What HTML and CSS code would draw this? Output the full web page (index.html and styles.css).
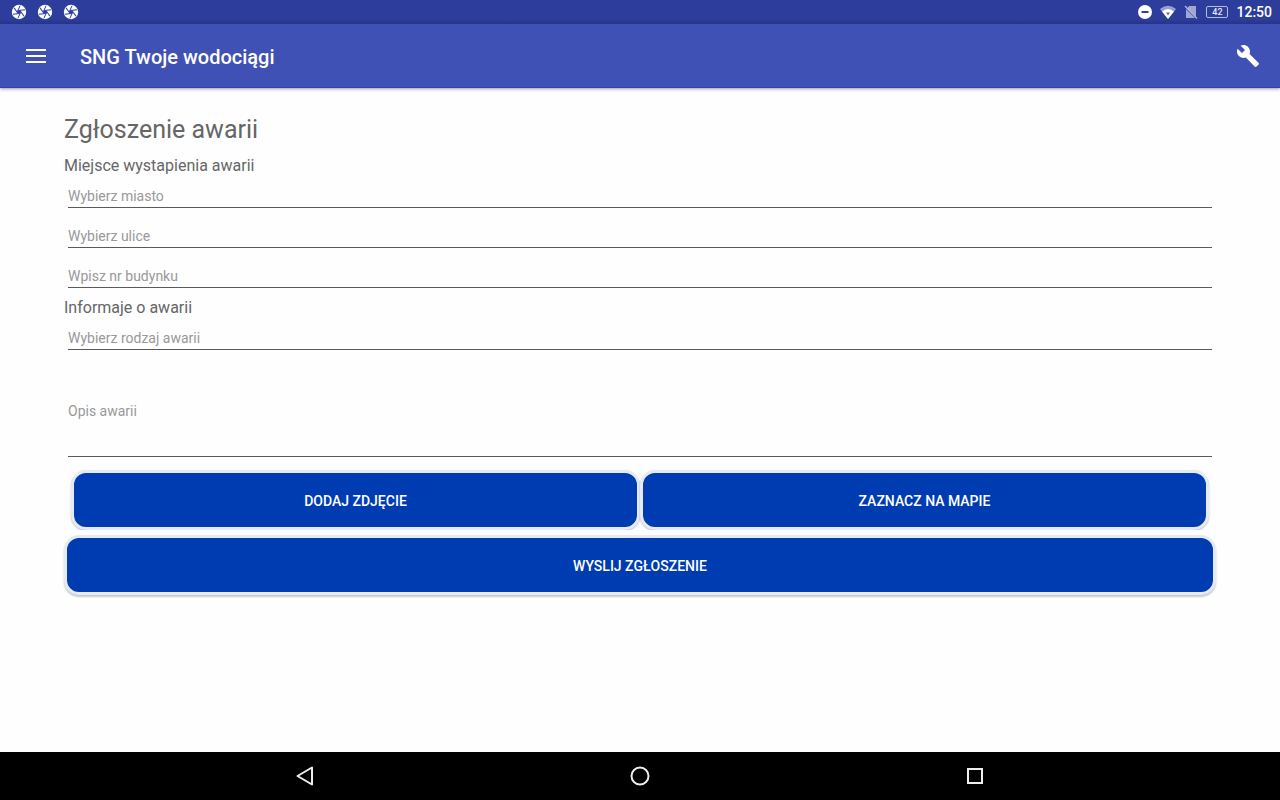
FILE: index.html
```html
<!DOCTYPE html>
<html lang="pl">
<head>
<meta charset="utf-8">
<meta name="viewport" content="width=device-width, initial-scale=1">
<title>SNG Twoje wodociągi</title>
<link rel="stylesheet" href="styles.css">
</head>
<body>
<svg class="defs" aria-hidden="true">
  <symbol id="shutter" viewBox="0 0 24 24">
    <circle cx="12" cy="12" r="10.800" fill="#fff"/>
    <circle cx="12" cy="12" r="2.800" fill="#2d3d9c"/>
    <g stroke="#2d3d9c" stroke-width="1.500">
      <path id="blade" d="M9.600 11.500L13.600 2.500"/>
      <use href="#blade" transform="rotate(60 12 12)"/>
      <use href="#blade" transform="rotate(120 12 12)"/>
      <use href="#blade" transform="rotate(180 12 12)"/>
      <use href="#blade" transform="rotate(240 12 12)"/>
      <use href="#blade" transform="rotate(300 12 12)"/>
    </g>
  </symbol>
</svg>
<div class="screen">
  <div class="status">
    <div class="status-apps">
      <svg class="shutter"><use href="#shutter"/></svg>
      <svg class="shutter"><use href="#shutter"/></svg>
      <svg class="shutter"><use href="#shutter"/></svg>
    </div>
    <div class="status-system">
      <svg class="dnd" viewBox="0 0 14 14"><circle cx="7" cy="7" r="7" fill="#fff"/><path d="M3.500 7h7" stroke="#303f9f" stroke-width="2"/></svg>
      <svg class="wifi" viewBox="0 0 16 14"><path d="M0 4Q8-2.500 16 4L8 14z" fill="#fff" opacity=".5"/><path d="M2 6.500Q8 1.500 14 6.500L8 14z" fill="#fff"/><path d="M6 7.500h4L8 10.500z" fill="#66727a"/></svg>
      <svg class="sim" viewBox="0 0 14 14"><path d="M5 1h7v10.500L3.500 3z M2 4v9h9z" fill="#fff" opacity=".55"/><path d="M1 1l12 12.500" stroke="#fff" stroke-opacity=".65" stroke-width="1.200"/></svg>
      <span class="battery">42</span>
      <span class="clock">12:50</span>
    </div>
  </div>
  <header class="appbar">
    <button class="icon-button" type="button" aria-label="Menu">
      <svg class="icon" viewBox="0 0 24 24"><path fill="#fff" d="M2 5h20v2H2zm0 6h20v2H2zm0 6h20v2H2z"/></svg>
    </button>
    <div class="appbar-title">SNG Twoje wodociągi</div>
    <button class="icon-button" type="button" aria-label="Narzędzia">
      <svg class="icon" viewBox="0 0 24 24"><path fill="#fff" d="M22.700 19l-9.100-9.100c.9-2.300.4-5-1.500-6.900-2-2-5-2.400-7.400-1.300L9 6 6 9 1.600 4.700C.4 7.100.9 10.100 2.900 12.100c1.900 1.900 4.600 2.400 6.900 1.500l9.100 9.100c.4.400 1 .4 1.400 0l2.300-2.300c.5-.4.5-1.100.1-1.400z"/></svg>
    </button>
  </header>
  <main class="content">
    <h1 class="title">Zgłoszenie awarii</h1>
    <form class="form">
      <h2 class="section">Miejsce wystapienia awarii</h2>
      <div class="fields">
        <input class="field" type="text" aria-label="Miasto" placeholder="Wybierz miasto">
        <input class="field" type="text" aria-label="Ulica" placeholder="Wybierz ulice">
        <input class="field" type="text" aria-label="Numer budynku" placeholder="Wpisz nr budynku">
      </div>
      <h2 class="section section-next">Informaje o awarii</h2>
      <div class="fields">
        <input class="field" type="text" aria-label="Rodzaj awarii" placeholder="Wybierz rodzaj awarii">
        <textarea class="field field-area" aria-label="Opis awarii" placeholder="Opis awarii"></textarea>
      </div>
      <div class="actions">
        <button class="action" type="button">DODAJ ZDJĘCIE</button>
        <button class="action" type="button">ZAZNACZ NA MAPIE</button>
      </div>
      <button class="action action-wide" type="submit">WYSLIJ ZGŁOSZENIE</button>
    </form>
  </main>
  <nav class="navbar">
    <button class="nav-button" type="button" aria-label="Wstecz">
      <svg class="icon" viewBox="0 0 24 24"><path d="M4.500 12L19 3.500v17z" fill="none" stroke="#eee" stroke-width="2" stroke-linejoin="round"/></svg>
    </button>
    <button class="nav-button" type="button" aria-label="Ekran główny">
      <svg class="icon" viewBox="0 0 24 24"><circle cx="12" cy="12" r="8.500" fill="none" stroke="#eee" stroke-width="2"/></svg>
    </button>
    <button class="nav-button" type="button" aria-label="Ostatnie">
      <svg class="icon" viewBox="0 0 24 24"><path d="M5 5h14v14H5z" fill="none" stroke="#eee" stroke-width="2"/></svg>
    </button>
  </nav>
</div>
</body>
</html>
```
FILE: styles.css
```css
* {
  box-sizing: border-box;
}

body {
  margin: 0;
  background: #fefefe;
  color: #666;
  font-family: Roboto, "Noto Sans", sans-serif;
}

button,
input,
textarea {
  font-family: inherit;
}

.defs {
  position: absolute;
  width: 0;
  height: 0;
}

.screen {
  display: flex;
  flex-direction: column;
  min-height: 100vh;
}

.status {
  display: flex;
  align-items: center;
  justify-content: space-between;
  height: 24px;
  padding: 0 8px 0 11px;
  background: linear-gradient(#2d3d9c 80%, #26358a);
  color: #fff;
}

.status-apps {
  display: flex;
  gap: 10px;
}

.shutter {
  width: 16px;
  height: 16px;
}

.status-system {
  display: flex;
  align-items: center;
  gap: 8px;
}

.dnd,
.sim {
  width: 14px;
  height: 14px;
}

.wifi {
  width: 16px;
  height: 14px;
}

.battery {
  width: 22px;
  border: 1px solid #b4bbe2;
  border-radius: 2px;
  color: #e4e7f6;
  font-size: 9px;
  font-weight: 500;
  line-height: 10px;
  text-align: center;
}

.clock {
  font-size: 14px;
  font-weight: 500;
  line-height: 24px;
}

.appbar {
  display: flex;
  align-items: center;
  height: 64px;
  padding: 0 20px 0 24px;
  background: #3f51b5;
  border-bottom: 1px solid #31429c;
  box-shadow: 0 1px 3px rgba(40, 55, 130, 0.5);
}

.icon-button {
  display: flex;
  padding: 0;
  border: 0;
  background: none;
}

.icon {
  width: 24px;
  height: 24px;
}

.appbar-title {
  flex: 1;
  padding: 2px 0 0 32px;
  color: #fff;
  font-size: 20px;
  font-weight: 500;
  line-height: 24px;
}

.content {
  flex: 1;
  padding: 26px 64px;
}

.title {
  margin: 0 0 10px;
  font-size: 25px;
  font-weight: 400;
  line-height: 32px;
}

.form {
  display: flex;
  flex-direction: column;
}

.section {
  margin: 0 0 8px;
  font-size: 16px;
  font-weight: 400;
  line-height: 20px;
}

.section-next {
  margin-top: 10px;
}

.fields {
  display: flex;
  flex-direction: column;
  gap: 16px;
  padding: 0 4px;
}

.field {
  width: 100%;
  height: 24px;
  padding: 0;
  border: 0;
  border-bottom: 1px solid #5a5a5a;
  border-radius: 0;
  background: transparent;
  color: #333;
  font-size: 14px;
  line-height: 20px;
  outline: 0;
}

.field::placeholder {
  color: #999;
  opacity: 1;
}

.field-area {
  height: 91px;
  padding: 35px 0;
  resize: none;
}

.actions {
  display: flex;
  margin-top: 11px;
  padding: 2px 7px 0;
  overflow: hidden;
}

.action {
  flex: 1;
  height: 60px;
  padding: 2px 6px 0;
  border: 3px solid #e6ebf3;
  border-radius: 15px;
  background: #003cb1;
  box-shadow: 0 1px 2px rgba(0, 0, 0, 0.25);
  color: #fff;
  font-size: 14px;
  font-weight: 500;
}

.action-wide {
  flex: none;
  width: 100%;
  margin-top: 5px;
  box-shadow: 0 2px 2px rgba(0, 0, 0, 0.22);
}

.navbar {
  display: flex;
  justify-content: center;
  gap: 24.300%;
  height: 48px;
  background: #000;
}

.nav-button {
  display: flex;
  align-items: center;
  padding: 0;
  border: 0;
  background: none;
}
```
